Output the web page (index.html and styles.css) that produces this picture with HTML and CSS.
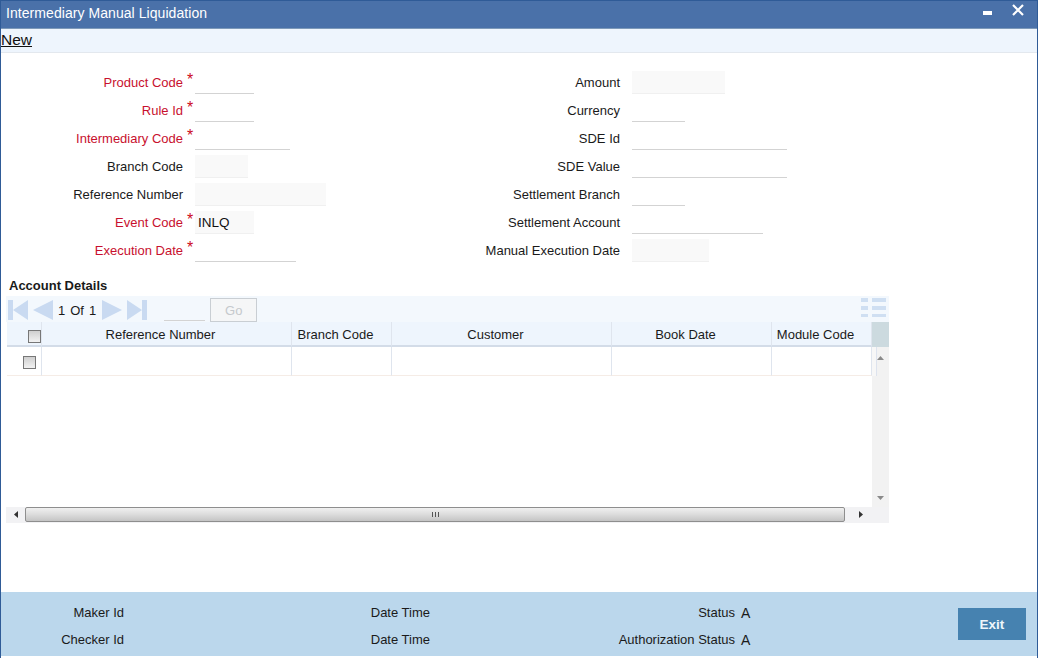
FILE: index.html
```html
<!DOCTYPE html>
<html lang="en">
<head>
<meta charset="utf-8">
<title>Intermediary Manual Liquidation</title>
<link rel="stylesheet" href="styles.css">
</head>
<body>
<div class="window">
  <header class="titlebar">
    <span class="title">Intermediary Manual Liquidation</span>
    <span class="win-icons">
      <svg class="min-icon" width="9" height="4" viewBox="0 0 9 4"><rect width="9" height="4" fill="#fff"/></svg>
      <svg class="close-icon" width="12" height="12" viewBox="0 0 12 12"><path d="M1 1l10 10M11 1L1 11" stroke="#fff" stroke-width="2.2" fill="none"/></svg>
    </span>
  </header>
  <nav class="toolbar"><a class="new-link">New</a></nav>

  <section class="form">
    <div class="col col-left">
      <div class="row req"><label>Product Code</label><i>*</i><span class="field line w59"></span></div>
      <div class="row req"><label>Rule Id</label><i>*</i><span class="field line w59"></span></div>
      <div class="row req"><label>Intermediary Code</label><i>*</i><span class="field line w95"></span></div>
      <div class="row"><label>Branch Code</label><i></i><span class="field box w53"></span></div>
      <div class="row"><label>Reference Number</label><i></i><span class="field box w131"></span></div>
      <div class="row req"><label>Event Code</label><i>*</i><span class="field box w59">INLQ</span></div>
      <div class="row req"><label>Execution Date</label><i>*</i><span class="field line w101"></span></div>
    </div>
    <div class="col col-right">
      <div class="row"><label>Amount</label><span class="field box w93"></span></div>
      <div class="row"><label>Currency</label><span class="field line w53"></span></div>
      <div class="row"><label>SDE Id</label><span class="field line w155"></span></div>
      <div class="row"><label>SDE Value</label><span class="field line w155"></span></div>
      <div class="row"><label>Settlement Branch</label><span class="field line w53"></span></div>
      <div class="row"><label>Settlement Account</label><span class="field line w131"></span></div>
      <div class="row"><label>Manual Execution Date</label><span class="field box w77"></span></div>
    </div>
  </section>

  <h2 class="section-title">Account Details</h2>

  <section class="grid">
    <div class="pager">
      <svg class="pager-first" width="20" height="22" viewBox="0 0 20 22"><path d="M0 1h5v20H0zM5 11L20 1v20z" fill="#c9daf1"/></svg>
      <svg class="pager-prev" width="20" height="22" viewBox="0 0 20 22"><path d="M0 11L20 1v20z" fill="#c9daf1"/></svg>
      <span class="page-text">1</span><span class="page-text">Of</span><span class="page-text">1</span>
      <svg class="pager-next" width="20" height="22" viewBox="0 0 20 22"><path d="M20 11L0 1v20z" fill="#c9daf1"/></svg>
      <svg class="pager-last" width="20" height="22" viewBox="0 0 20 22"><path d="M20 1h-5v20h5zM15 11L0 1v20z" fill="#c9daf1"/></svg>
      <span class="page-input"></span>
      <button class="go" type="button">Go</button>
      <svg class="layout-icon" width="25" height="20" viewBox="0 0 25 20"><path d="M0 0h7v4H0zM11 0h14v4H11zM0 8h7v4H0zM11 8h14v4H11zM0 16h7v3H0zM11 16h14v3H11z" fill="#cfdff2"/></svg>
    </div>
    <div class="grid-body">
      <div class="grid-main">
        <table>
          <colgroup><col class="c1"><col class="c2"><col class="c3"><col class="c4"><col class="c5"><col class="c6"></colgroup>
          <thead>
            <tr>
              <th class="th-check"><span class="check"></span></th>
              <th>Reference Number</th><th>Branch Code</th><th>Customer</th><th>Book Date</th><th>Module Code</th>
            </tr>
          </thead>
          <tbody>
            <tr><td class="td-check"><span class="check"></span></td><td></td><td></td><td></td><td></td><td></td></tr>
          </tbody>
        </table>
      </div>
      <div class="vscroll">
        <div class="v-corner"></div>
        <div class="v-track">
          <span class="v-btn"><svg width="7" height="4" viewBox="0 0 7 4"><path d="M3.5 0L7 4H0z" fill="#8a8a8a"/></svg></span>
          <span class="v-btn"><svg width="7" height="4" viewBox="0 0 7 4"><path d="M3.5 4L7 0H0z" fill="#8a8a8a"/></svg></span>
        </div>
      </div>
    </div>
    <div class="hscroll">
      <span class="h-btn"><svg width="4" height="7" viewBox="0 0 4 7"><path d="M0 3.5L4 0v7z" fill="#333"/></svg></span>
      <div class="h-thumb"><span class="grip"></span></div>
      <span class="h-btn right"><svg width="4" height="7" viewBox="0 0 4 7"><path d="M4 3.5L0 0v7z" fill="#333"/></svg></span>
    </div>
  </section>

  <footer class="footer">
    <div class="audit">
      <div class="a-row">
        <span class="a-label a1">Maker Id</span>
        <span class="a-label a2">Date Time</span>
        <span class="a-label a3">Status</span><span class="a-val">A</span>
      </div>
      <div class="a-row">
        <span class="a-label a1">Checker Id</span>
        <span class="a-label a2">Date Time</span>
        <span class="a-label a3">Authorization Status</span><span class="a-val">A</span>
      </div>
    </div>
    <button class="exit" type="button">Exit</button>
  </footer>
</div>
</body>
</html>
```
FILE: styles.css
```css
* { box-sizing: border-box; }
html, body { margin: 0; padding: 0; height: 100%; overflow: hidden; }
body { font-family: "Liberation Sans", Arial, sans-serif; font-size: 13px; color: #1a1a1a; background: #fff; }

.window {
  height: 658px;
  display: flex;
  flex-direction: column;
  border: 1px solid #2f5b97;
  border-bottom: 0;
  background: #fff;
}

.titlebar {
  height: 27px;
  flex: none;
  background: #4a71a9;
  color: #fff;
  display: flex;
  align-items: center;
  justify-content: space-between;
  padding: 0 13px 4px 5px;
  font-size: 14px;
  letter-spacing: 0.06px;
}
.win-icons { display: flex; align-self: flex-start; align-items: flex-start; gap: 20px; }
.min-icon { margin-top: 10px; }
.close-icon { margin-top: 3px; }

.toolbar {
  height: 25px;
  flex: none;
  background: #eef5fd;
  border-top: 1px solid #7d99b9;
  border-bottom: 1px solid #e3e8ee;
  line-height: 22px;
  font-size: 15.5px;
}
.new-link { color: #111; text-decoration: underline; }

.form { display: flex; padding-top: 18px; flex: none; height: 224px; }
.col { display: flex; flex-direction: column; gap: 5px; }
.col-left { width: 437px; }
.row { display: flex; height: 23px; align-items: stretch; }
.row label { line-height: 24px; text-align: right; }
.col-left label { width: 182px; }
.col-left i { width: 12px; font-style: normal; color: #cc0a1e; padding-left: 4px; line-height: 18px; font-size: 16px; }
.col-right label { width: 182px; margin-right: 12px; }
.req label { color: #c8102e; }
.field { display: block; line-height: 23px; padding-left: 3px; color: #111; font-size: 13.5px; }
.line { border-bottom: 1px solid #d3d3d3; }
.box { background: #f9f9f9; border-bottom: 1px solid #f0f0f0; }
.w53 { width: 53px; }
.w59 { width: 59px; }
.w77 { width: 77px; }
.w93 { width: 93px; }
.w95 { width: 95px; }
.w101 { width: 101px; }
.w131 { width: 131px; }
.w155 { width: 155px; }

.section-title { margin: 0; padding-left: 8px; font-size: 13px; font-weight: bold; line-height: 18px; height: 16px; flex: none; }

.grid { width: 883px; margin-left: 5px; margin-top: 3px; flex: none; background: #fff; }
.pager {
  height: 26px;
  background: #f3f8fd;
  display: flex;
  align-items: center;
  padding: 2px 0 0 2px;
}
.pager-prev { margin-left: 5px; margin-right: 5px; }
.page-text { margin-right: 5px; }
.pager-next { margin-left: 1px; }
.pager-last { margin-left: 5px; }
.page-input { width: 41px; align-self: flex-end; height: 24px; margin: 0 0 0 17px; position: relative; top: -1px; border-bottom: 1px solid #d3d3d3; }
.go {
  width: 47px;
  height: 24px;
  margin-left: 5px;
  background: #f5f6f7;
  border: 1px solid #c9ced3;
  color: #c5c9cd;
  font: 13px "Liberation Sans", Arial, sans-serif;
  padding: 0;
}
.layout-icon { margin-left: auto; margin-right: 3px; align-self: flex-start; }

.grid-body { display: flex; height: 185px; }
.grid-main { width: 866px; padding-left: 1px; background: #fff; }
table { border-collapse: separate; border-spacing: 0; table-layout: fixed; width: 865px; }
.c1 { width: 35px; }
.c2 { width: 250px; }
.c3 { width: 100px; }
.c4 { width: 220px; }
.c5 { width: 160px; }
.c6 { width: 100px; }
th {
  height: 25px;
  background: #eef5fd;
  font-weight: normal;
  font-size: 13px;
  color: #1a1a1a;
  text-align: center;
  padding: 2px 12px 0 0;
  border-right: 1px solid #dfe5ee;
  border-bottom: 2px solid #d3dce8;
  white-space: nowrap;
}
td {
  height: 29px;
  padding: 0;
  border-right: 1px solid #dfe5ee;
  border-bottom: 1px solid #f5ece6;
  text-align: center;
}
.th-check { padding: 3px 0 0 20px; }
.td-check { padding: 0 0 0 10px; }
.check {
  display: inline-block;
  width: 13px;
  height: 13px;
  border: 1px solid #777;
  background: linear-gradient(#cfcfcf, #f2f2f2);
  vertical-align: middle;
}

.vscroll { width: 17px; display: flex; flex-direction: column; }
.v-corner { height: 25px; background: #ccdadf; }
.v-track {
  flex: 1;
  background: linear-gradient(90deg, #f7f7f7 4px, #dde3ee 4px, #dde3ee 5px, transparent 5px) top left / 100% 29px no-repeat, #f2f2f2;
  display: flex;
  flex-direction: column;
  justify-content: space-between;
  align-items: center;
  padding: 3px 0 2px;
}
.v-btn { width: 15px; height: 15px; display: flex; align-items: center; justify-content: center; }

.hscroll {
  height: 16px;
  background: #f2f2f4;
  display: flex;
  align-items: flex-start;
  padding-right: 17px;
}
.h-btn { width: 19px; height: 15px; display: flex; align-items: center; justify-content: center; flex: none; }
.h-btn.right { margin-left: 4px; width: 23px; }
.h-thumb {
  flex: 1;
  height: 15px;
  border: 1px solid #8e8e8e;
  border-radius: 2px;
  background: linear-gradient(#f0f0f0, #dcdcdc 50%, #c4c4c4);
  display: flex;
  justify-content: center;
  align-items: center;
}
.grip { width: 7px; height: 5px; background: repeating-linear-gradient(90deg, #555 0 1px, transparent 1px 3px); }

.footer {
  margin-top: auto;
  height: 64px;
  flex: none;
  margin-bottom: 2px;
  background: #bbd7ec;
  display: flex;
}
.audit { flex: 1; padding-top: 12px; display: flex; flex-direction: column; gap: 9px; }
.a-row { display: flex; height: 18px; line-height: 18px; }
.a-label { text-align: right; }
.a1 { width: 123px; }
.a2 { width: 306px; }
.a3 { width: 305px; }
.a-val { margin-left: 6px; font-size: 14px; }
.exit {
  width: 68px;
  height: 32px;
  margin: 16px 11px 0 0;
  background: #4682b0;
  border: 0;
  color: #eef6fb;
  font: bold 13.5px "Liberation Sans", Arial, sans-serif;
  padding: 0;
}
```
